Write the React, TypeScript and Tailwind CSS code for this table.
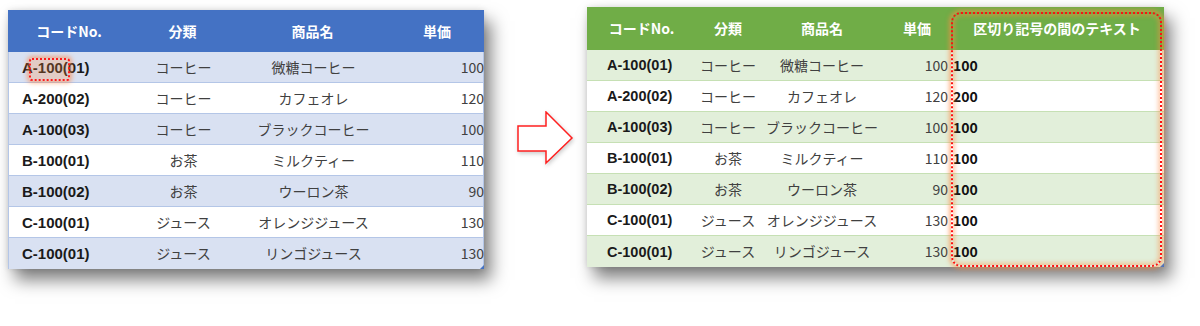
import React from "react";

const rows = [
  ["A-100(01)", "コーヒー", "微糖コーヒー", "100", "100"],
  ["A-200(02)", "コーヒー", "カフェオレ", "120", "200"],
  ["A-100(03)", "コーヒー", "ブラックコーヒー", "100", "100"],
  ["B-100(01)", "お茶", "ミルクティー", "110", "100"],
  ["B-100(02)", "お茶", "ウーロン茶", "90", "100"],
  ["C-100(01)", "ジュース", "オレンジジュース", "130", "100"],
  ["C-100(01)", "ジュース", "リンゴジュース", "130", "100"],
];

const font = { fontFamily: '"Noto Sans CJK JP", "Noto Sans", sans-serif' };
const latin = { fontFamily: '"Liberation Sans", Arial, sans-serif' };

function LeftTable() {
  return (
    <div className="relative w-[476px] bg-white shadow-[0_0_6px_rgba(0,0,0,0.12),7px_11px_16px_rgba(0,0,0,0.5)]">
      <div className="grid h-[42px] grid-cols-[122px_105px_155px_94px] items-center bg-[#4472C4] text-[14px] font-bold text-white">
        <div className="text-center">コードNo.</div>
        <div className="text-center">分類</div>
        <div className="text-center">商品名</div>
        <div className="text-center">単価</div>
      </div>
      {rows.map((r, i) => (
        <div
          key={i}
          className={
            "grid h-[31px] grid-cols-[122px_105px_155px_94px] items-center border-x border-[#B4C6E7] text-[14px] text-[#404040] " +
            (i % 2 === 0 ? "bg-[#D9E1F2]" : "bg-white") +
            (i < rows.length - 1 ? " border-b" : "")
          }
        >
          <div className="relative flex h-full items-center pl-[13px] pt-[2px] text-[15px] font-bold text-[#1a1a1a]" style={latin}>
            {r[0]}
            {i === 0 && (
              <div className="absolute left-[20px] top-[6px] h-[23px] w-[41px] rounded-[3px] border-2 border-dotted border-[#ff1a1a] bg-[rgba(255,140,60,0.25)] shadow-[0_0_4px_2px_rgba(255,130,60,0.55)]" />
            )}
          </div>
          <div className="text-center">{r[1]}</div>
          <div className="text-center">{r[2]}</div>
          <div className="pr-[1px] text-right">{r[3]}</div>
        </div>
      ))}
      <div className="absolute bottom-0 right-0 h-0 w-0 border-b-[4px] border-l-[4px] border-b-[#4472C4] border-l-transparent" />
    </div>
  );
}

function RightTable() {
  return (
    <div className="relative w-[577px] bg-white shadow-[0_0_6px_rgba(0,0,0,0.12),7px_11px_16px_rgba(0,0,0,0.5)]">
      <div className="grid h-[43px] grid-cols-[109px_64px_124px_66px_214px] items-center bg-[#70AD47] text-[14px] font-bold text-white">
        <div className="text-center">コードNo.</div>
        <div className="text-center">分類</div>
        <div className="text-center">商品名</div>
        <div className="text-center">単価</div>
        <div className="text-center">区切り記号の間のテキスト</div>
      </div>
      {rows.map((r, i) => (
        <div
          key={i}
          className={
            "grid h-[31px] grid-cols-[109px_64px_124px_66px_214px] items-center text-[14px] text-[#404040] " +
            (i % 2 === 0 ? "bg-[#E2EFDA]" : "bg-white") +
            (i < rows.length - 1 ? " border-b border-[#C6E0B4]" : "")
          }
        >
          <div className="pl-[20px] pt-[2px] text-[14.5px] font-bold text-[#1a1a1a]" style={latin}>{r[0]}</div>
          <div className="whitespace-nowrap text-center">{r[1]}</div>
          <div className="whitespace-nowrap text-center">{r[2]}</div>
          <div className="pr-[2px] text-right">{r[3]}</div>
          <div className="pl-[3px] font-bold text-[#111]">{r[4]}</div>
        </div>
      ))}
      <div className="absolute bottom-0 right-0 h-0 w-0 border-b-[4px] border-l-[4px] border-b-[#4472C4] border-l-transparent" />
      <div className="pointer-events-none absolute left-[364px] top-[5px] h-[255px] w-[211px] rounded-[10px] border-[2px] border-dotted border-[#ff1010] shadow-[0_0_4px_2px_rgba(255,140,70,0.6),inset_0_0_4px_2px_rgba(255,140,70,0.45)]" />
    </div>
  );
}

export default function App() {
  return (
    <div className="flex h-[326px] w-[1200px] items-start bg-white" style={font}>
      <div className="ml-[8px] mt-[10px]">
        <LeftTable />
      </div>
      <div className="w-[103px] pt-[111px]">
        <svg width="103" height="56" viewBox="0 0 103 56" className="drop-shadow-[1px_2px_2px_rgba(0,0,0,0.2)]">
          <polygon
            points="34,15 62,15 62,1 88,27 62,52 62,40 34,40"
            fill="#ffffff"
            stroke="#ff2020"
            strokeWidth="1.5"
            strokeLinejoin="miter"
          />
        </svg>
      </div>
      <div className="mt-[7px]">
        <RightTable />
      </div>
    </div>
  );
}
